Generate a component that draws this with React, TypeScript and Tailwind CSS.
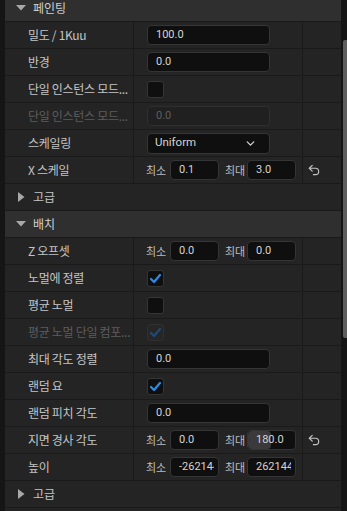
import { ChevronDown, Undo2 } from "lucide-react";

const font = "font-['Noto_Sans_CJK_KR','Noto_Sans',sans-serif]";
const num = "font-['Roboto','Noto_Sans_CJK_KR',sans-serif]";

type Value =
  | { kind: "text"; v: string; disabled?: boolean }
  | { kind: "check"; on: boolean; disabled?: boolean }
  | { kind: "select"; v: string }
  | { kind: "range"; min: string; max: string; fill?: boolean };

type Row =
  | { type: "category"; label: string }
  | { type: "group"; label: string }
  | { type: "prop"; label: string; value: Value; disabled?: boolean; reset?: boolean };

const rows: Row[] = [
  { type: "category", label: "페인팅" },
  { type: "prop", label: "밀도 / 1Kuu", value: { kind: "text", v: "100.0" } },
  { type: "prop", label: "반경", value: { kind: "text", v: "0.0" } },
  { type: "prop", label: "단일 인스턴스 모드...", value: { kind: "check", on: false } },
  { type: "prop", label: "단일 인스턴스 모드...", disabled: true, value: { kind: "text", v: "0.0", disabled: true } },
  { type: "prop", label: "스케일링", value: { kind: "select", v: "Uniform" } },
  { type: "prop", label: "X 스케일", reset: true, value: { kind: "range", min: "0.1", max: "3.0" } },
  { type: "group", label: "고급" },
  { type: "category", label: "배치" },
  { type: "prop", label: "Z 오프셋", value: { kind: "range", min: "0.0", max: "0.0" } },
  { type: "prop", label: "노멀에 정렬", value: { kind: "check", on: true } },
  { type: "prop", label: "평균 노멀", value: { kind: "check", on: false } },
  { type: "prop", label: "평균 노멀 단일 컴포...", disabled: true, value: { kind: "check", on: true, disabled: true } },
  { type: "prop", label: "최대 각도 정렬", value: { kind: "text", v: "0.0" } },
  { type: "prop", label: "랜덤 요", value: { kind: "check", on: true } },
  { type: "prop", label: "랜덤 피치 각도", value: { kind: "text", v: "0.0" } },
  { type: "prop", label: "지면 경사 각도", reset: true, value: { kind: "range", min: "0.0", max: "180.0", fill: true } },
  { type: "prop", label: "높이", value: { kind: "range", min: "-262144.0", max: "262144.0" } },
  { type: "group", label: "고급" },
];

function Check({ on, disabled }: { on: boolean; disabled?: boolean }) {
  return (
    <div
      className={`w-[17px] h-[17px] rounded-[3px] border ${
        disabled ? "bg-[#262626] border-[#303030]" : "bg-[#0f0f0f] border-[#353535]"
      }`}
    >
      {on && (
        <svg width="15" height="15" viewBox="0 0 15 15">
          <polyline
            points="3,8 6,11 12,4"
            fill="none"
            stroke={disabled ? "#1c4b7a" : "#2b8ceb"}
            strokeWidth="2.2"
            strokeLinecap="round"
            strokeLinejoin="round"
          />
        </svg>
      )}
    </div>
  );
}

function NumBox({ v, w, fill }: { v: string; w: string; fill?: boolean }) {
  return (
    <div
      className={`relative ${w} h-[20px] rounded-[4px] bg-[#0f0f0f] border border-[#353535] overflow-hidden flex items-center pl-[8px] pr-[4px] ${num} text-[11px] text-[#d4d4d4]`}
    >
      {fill && <div className="absolute left-0 top-0 bottom-0 w-[23px] bg-[#3a3a3a] rounded-[4px]" />}
      <span className="relative block w-full overflow-hidden whitespace-nowrap">{v}</span>
    </div>
  );
}

function ValueCell({ value }: { value: Value }) {
  if (value.kind === "text")
    return (
      <div
        className={`w-[123px] h-[20px] rounded-[4px] border flex items-center pl-[8px] ${num} text-[11px] ${
          value.disabled
            ? "bg-[#202020] border-[#2f2f2f] text-[#5e5e5e]"
            : "bg-[#0f0f0f] border-[#353535] text-[#d4d4d4]"
        }`}
      >
        {value.v}
      </div>
    );
  if (value.kind === "check") return <Check on={value.on} disabled={value.disabled} />;
  if (value.kind === "select")
    return (
      <div
        className={`w-[123px] h-[21px] rounded-[4px] bg-[#0f0f0f] border border-[#353535] flex items-center justify-between pl-[7px] pr-[12px] ${num} text-[11.5px] text-[#d4d4d4]`}
      >
        <span>{value.v}</span>
        <ChevronDown size={13} strokeWidth={2.5} color="#cfcfcf" />
      </div>
    );
  return (
    <div className="flex items-center">
      <span className={`w-[24px] text-[11px] text-[#bdbdbd] ${font}`}>최소</span>
      <NumBox v={value.min} w="w-[49px]" />
      <span className={`ml-[6px] w-[22px] text-[11px] text-[#bdbdbd] ${font}`}>최대</span>
      <NumBox v={value.max} w="w-[49px]" fill={value.fill} />
    </div>
  );
}

function Triangle({ open }: { open: boolean }) {
  return open ? (
    <svg width="10" height="6" viewBox="0 0 10 6" className="ml-[11px] mr-[7px]">
      <polygon points="0,0 10,0 5,5.5" fill="#a8a8a8" />
    </svg>
  ) : (
    <svg width="7" height="10" viewBox="0 0 7 10" className="ml-[13px] mr-[8px]">
      <polygon points="0,0 6.5,5 0,10" fill="#a8a8a8" />
    </svg>
  );
}

export default function App() {
  return (
    <div className={`w-[347px] h-[511px] bg-[#151515] overflow-hidden flex ${font}`}>
      <div className="ml-[5px] w-[336px] flex flex-col -mt-[5px]">
        {rows.map((r, i) => {
          if (r.type === "category")
            return (
              <div key={i} className="h-[27px] shrink-0 bg-[#2f2f2f] border-b border-[#1a1a1a] flex items-center">
                <Triangle open />
                <span className="text-[12px] text-[#d0d0d0]">{r.label}</span>
              </div>
            );
          if (r.type === "group")
            return (
              <div key={i} className="h-[27px] shrink-0 bg-[#242424] border-b border-[#1a1a1a] flex items-center">
                <Triangle open={false} />
                <span className="text-[12px] text-[#c4c4c4]">{r.label}</span>
              </div>
            );
          return (
            <div key={i} className="h-[27px] shrink-0 bg-[#242424] border-b border-[#1a1a1a] flex">
              <div
                className={`w-[128px] flex items-center pl-[23px] text-[12px] tracking-[-0.3px] whitespace-nowrap overflow-hidden ${
                  r.disabled ? "text-[#5c5c5c]" : "text-[#c4c4c4]"
                }`}
              >
                {r.label}
              </div>
              <div className="w-[1px] bg-[#1a1a1a]" />
              <div className="w-[168px] flex items-center pl-[12px]">
                <div className={r.value.kind === "range" ? "" : "pl-[1px]"}>
                  <ValueCell value={r.value} />
                </div>
              </div>
              <div className="w-[1px] bg-[#1a1a1a]" />
              <div className="flex-1 flex items-center pl-[4px]">
                {r.reset && <Undo2 size={14} strokeWidth={2} color="#c4c4c4" />}
              </div>
            </div>
          );
        })}
        <div className="h-[27px] shrink-0 bg-[#242424]" />
      </div>
      <div className="ml-[2px] mt-[40px] w-[4px] h-[298px] rounded-l-[2px] bg-[#5e5e5e]" />
    </div>
  );
}
